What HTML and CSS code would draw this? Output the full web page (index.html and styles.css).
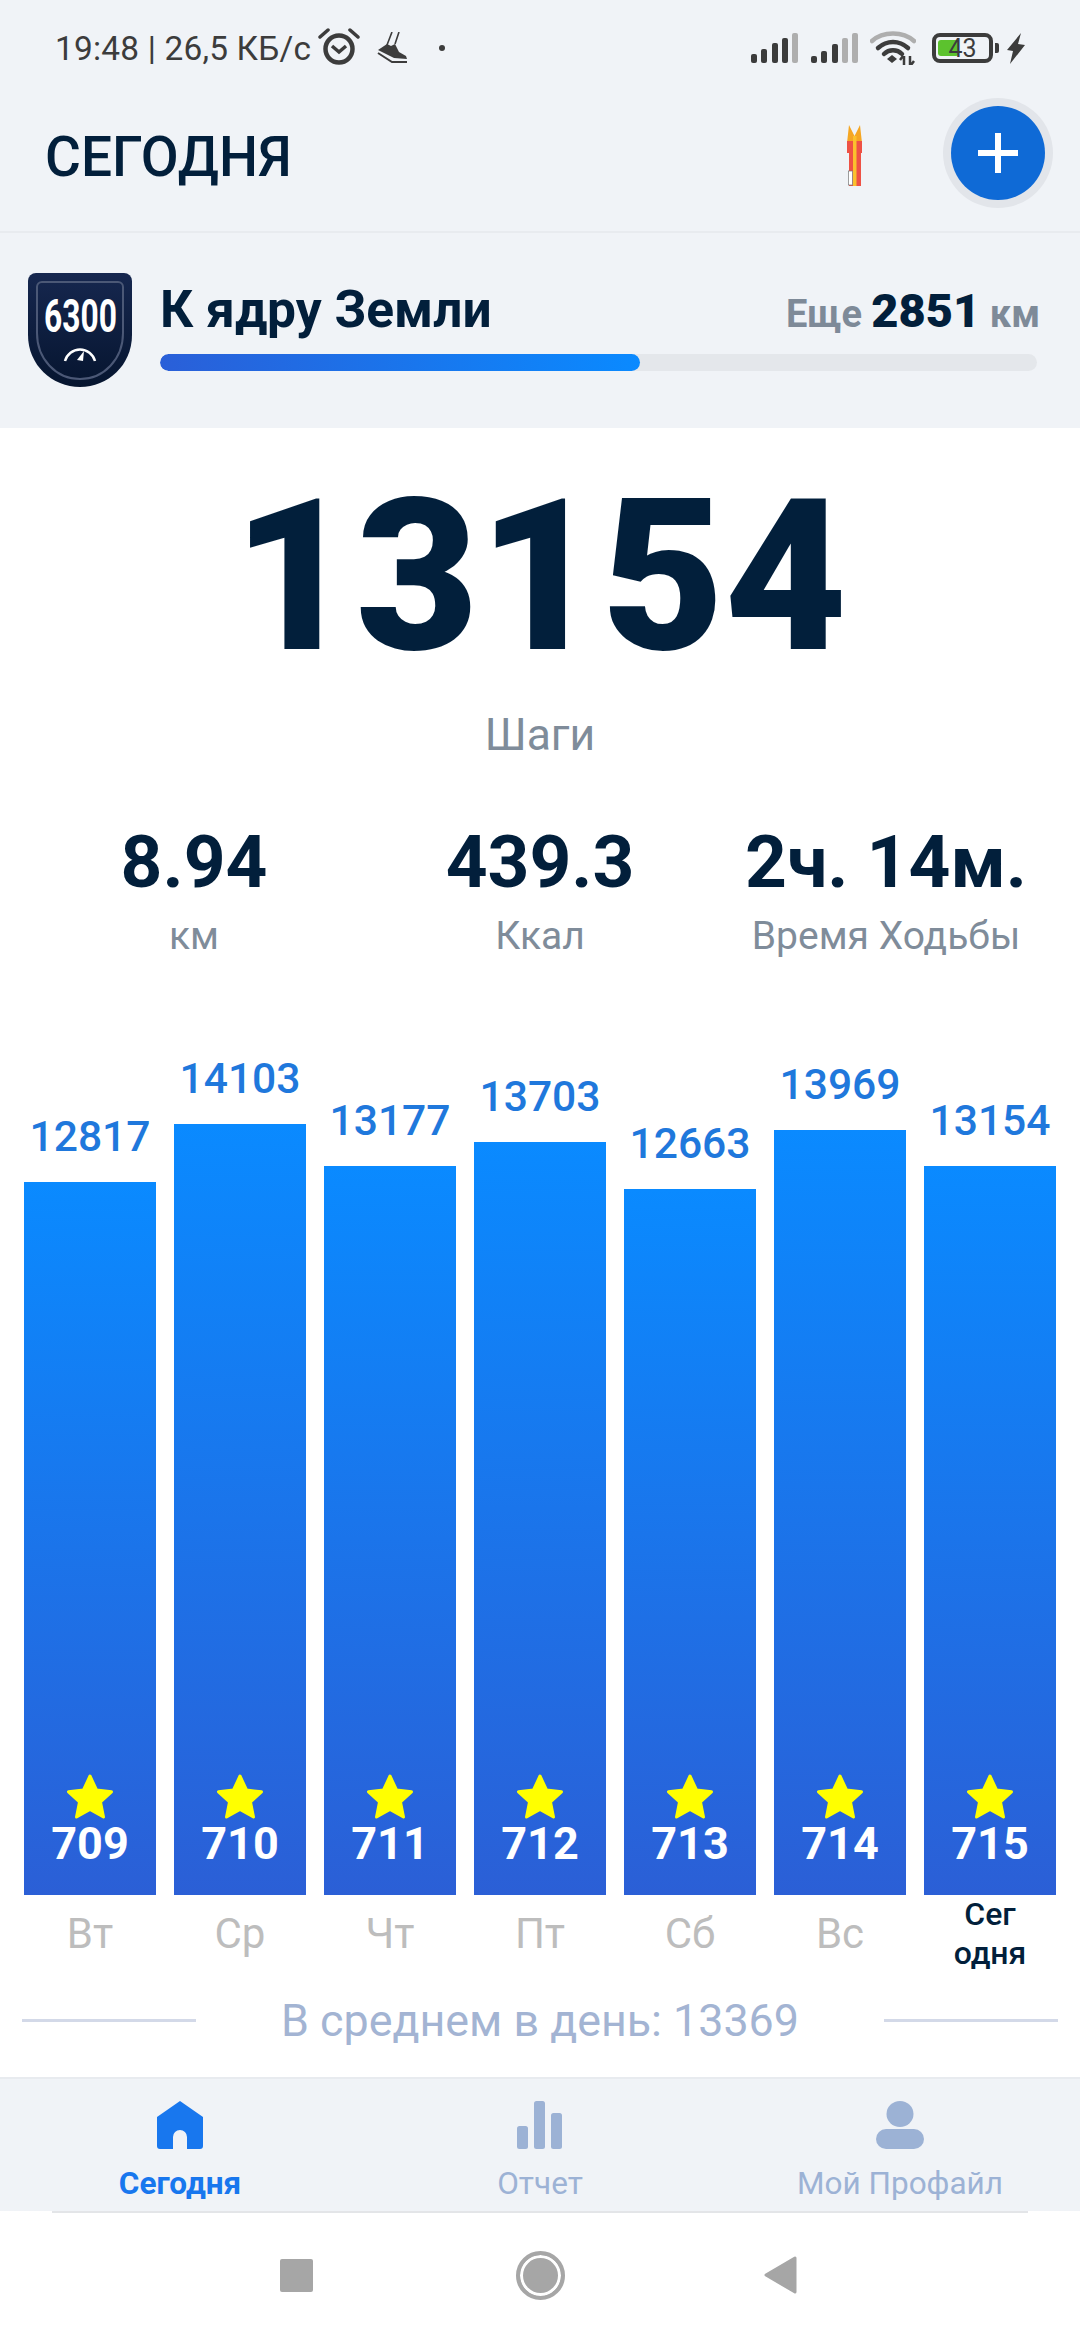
FILE: index.html
```html
<!DOCTYPE html>
<html lang="ru">

<head>
    <meta charset="UTF-8">
    <meta name="viewport" content="width=device-width, initial-scale=1.0">
    <title>Сегодня</title>
    <link rel="stylesheet" href="styles.css">
</head>

<body>
    <section id="top">
        <div class="status">
            <span class="status-text">19:48 | 26,5 КБ/с</span>
            <svg class="alarm" viewBox="0 0 42 38" width="42" height="38">
                <circle cx="21" cy="22" r="13.5" fill="none" stroke="#3c3c3c" stroke-width="4.5" />
                <path d="M14 19l7 6 7-6" fill="none" stroke="#3c3c3c" stroke-width="3.5" />
                <path d="M2 10l8-7M40 10l-8-7" fill="none" stroke="#3c3c3c" stroke-width="3.5" stroke-linecap="round" />
            </svg>
            <svg class="shoe" viewBox="0 0 30 33" width="30" height="33">
                <path d="M15 0L10 13M22 0L18 12" fill="none" stroke="#3c3c3c" stroke-width="1.6" />
                <path d="M1 18L10 12 14 14 18 12 22 20 29 24 30 27 17 26z" fill="#3c3c3c" />
                <path d="M1 21l14 9h15" fill="none" stroke="#3c3c3c" stroke-width="2" />
            </svg>
            <span class="dot"></span>
            <div class="status-right">
                <svg viewBox="0 0 48 30" width="48" height="30">
                    <g fill="#3c3c3c">
                        <rect x="0" y="21" width="6" height="9" rx="2" />
                        <rect x="10" y="16" width="6" height="14" rx="2" />
                        <rect x="21" y="10" width="6" height="20" rx="2" />
                        <rect x="31" y="5" width="6" height="25" rx="2" />
                    </g>
                    <rect x="41" y="0" width="6" height="30" rx="2" fill="#aeaeae" />
                </svg>
                <svg viewBox="0 0 48 30" width="48" height="30">
                    <g fill="#3c3c3c">
                        <rect x="0" y="23" width="6" height="7" rx="2" />
                        <rect x="10" y="18" width="6" height="12" rx="2" />
                        <rect x="21" y="11" width="6" height="19" rx="2" />
                    </g>
                    <g fill="#aeaeae">
                        <rect x="31" y="5" width="6" height="25" rx="2" />
                        <rect x="41" y="0" width="6" height="30" rx="2" />
                    </g>
                </svg>
                <svg class="wifi" viewBox="0 0 46 34" width="46" height="34">
                    <path d="M2 10C13 0 33 0 44 10" fill="none" stroke="#aeaeae" stroke-width="4.5" stroke-linecap="round" />
                    <path d="M8 17C17 9 29 9 38 17" fill="none" stroke="#3c3c3c" stroke-width="4.5" stroke-linecap="round" />
                    <path d="M14 23C19 18 27 18 32 23" fill="none" stroke="#3c3c3c" stroke-width="4.5" stroke-linecap="round" />
                    <path d="M17 28l5-4 5 4-5 4z" fill="#3c3c3c" />
                    <path d="M34 25v9M33 25l-3 4M40 34v-9M41 34l3-4" fill="none" stroke="#3c3c3c" stroke-width="2.500" />
                </svg>
                <div class="battery">
                    <div class="battery-body">
                        <span class="battery-fill"></span>
                        <span class="battery-num">43</span>
                    </div>
                    <span class="battery-nub"></span>
                </div>
                <svg class="bolt" viewBox="0 0 18 31" width="18" height="31">
                    <path d="M14 0L0 17l6 1-3 13 15-19-7-1z" fill="#3c3c3c" />
                </svg>
            </div>
        </div>
        <div class="topbar">
            <h1>СЕГОДНЯ</h1>
            <svg class="rocket" viewBox="0 0 15 61" width="15" height="61">
                <path d="M2 0l5.500 11L13 0l2 18H0z" fill="#f5a623" />
                <rect x="0" y="16" width="15" height="12" fill="#ee5145" />
                <rect x="2" y="28" width="12" height="33" fill="#ee5145" />
                <rect x="6" y="11" width="3.500" height="50" fill="#fbc02d" />
                <rect x="1.500" y="46" width="4" height="14" fill="#fff" stroke="#777" stroke-width="0.700" />
            </svg>
            <div class="add-ring">
                <div class="add-btn">
                    <svg viewBox="0 0 40 40" width="40" height="40">
                        <path d="M20 0v40M0 20h40" stroke="#fff" stroke-width="6" />
                    </svg>
                </div>
            </div>
        </div>
    </section>

    <section id="goal">
        <div class="badge">
            <svg viewBox="0 0 104 114" width="104" height="114">
                <defs>
                    <linearGradient id="badge-bg" x1="0" y1="0" x2="0" y2="1">
                        <stop offset="0" stop-color="#16274f" />
                        <stop offset="1" stop-color="#06152f" />
                    </linearGradient>
                </defs>
                <path d="M8 0H96a8 8 0 0 1 8 8V62C104 92 80 114 52 114S0 92 0 62V8A8 8 0 0 1 8 0z" fill="url(#badge-bg)" />
                <path d="M14 9H90a5 5 0 0 1 5 5V60C95 86 76 106 52 106S9 86 9 60V14A5 5 0 0 1 14 9z" fill="none" stroke="#4b5876" stroke-width="2" />
                <path d="M37 88a15.500 15.500 0 0 1 30 0" fill="none" stroke="#fff" stroke-width="2.500" />
                <path d="M49 87l7-9-1 10z" fill="#fff" />
            </svg>
            <span class="badge-num">6300</span>
        </div>
        <div class="goal-body">
            <div class="goal-head">
                <span class="goal-title">К ядру Земли</span>
                <span class="goal-left">Еще <b>2851</b> км</span>
            </div>
            <div class="goal-track">
                <div class="goal-fill"></div>
            </div>
        </div>
    </section>

    <section id="today">
        <div class="steps">13154</div>
        <div class="steps-label">Шаги</div>
        <div class="stats">
            <div class="stat">
                <div class="stat-num">8.94</div>
                <div class="stat-label">км</div>
            </div>
            <div class="stat">
                <div class="stat-num">439.3</div>
                <div class="stat-label">Ккал</div>
            </div>
            <div class="stat">
                <div class="stat-num">2ч. 14м.</div>
                <div class="stat-label">Время Ходьбы</div>
            </div>
        </div>
    </section>

    <section id="chart">
        <div class="col">
            <div class="col-val">12817</div>
            <div class="bar" style="height: 713px">
                <svg class="star" viewBox="0 0 50 46" width="50" height="46"><path d="M25 3l6.500 14 15 1.800-11 10.200 3 15-13.500-7.500L11.500 44l3-15-11-10.200 15-1.800z" fill="#ffff00" stroke="#ffff00" stroke-width="3" stroke-linejoin="round" /></svg>
                <div class="bar-num">709</div>
            </div>
        </div>
        <div class="col">
            <div class="col-val">14103</div>
            <div class="bar" style="height: 771px">
                <svg class="star" viewBox="0 0 50 46" width="50" height="46"><path d="M25 3l6.500 14 15 1.800-11 10.200 3 15-13.500-7.500L11.500 44l3-15-11-10.200 15-1.800z" fill="#ffff00" stroke="#ffff00" stroke-width="3" stroke-linejoin="round" /></svg>
                <div class="bar-num">710</div>
            </div>
        </div>
        <div class="col">
            <div class="col-val">13177</div>
            <div class="bar" style="height: 729px">
                <svg class="star" viewBox="0 0 50 46" width="50" height="46"><path d="M25 3l6.500 14 15 1.800-11 10.200 3 15-13.500-7.500L11.500 44l3-15-11-10.200 15-1.800z" fill="#ffff00" stroke="#ffff00" stroke-width="3" stroke-linejoin="round" /></svg>
                <div class="bar-num">711</div>
            </div>
        </div>
        <div class="col">
            <div class="col-val">13703</div>
            <div class="bar" style="height: 753px">
                <svg class="star" viewBox="0 0 50 46" width="50" height="46"><path d="M25 3l6.500 14 15 1.800-11 10.200 3 15-13.500-7.500L11.500 44l3-15-11-10.200 15-1.800z" fill="#ffff00" stroke="#ffff00" stroke-width="3" stroke-linejoin="round" /></svg>
                <div class="bar-num">712</div>
            </div>
        </div>
        <div class="col">
            <div class="col-val">12663</div>
            <div class="bar" style="height: 706px">
                <svg class="star" viewBox="0 0 50 46" width="50" height="46"><path d="M25 3l6.500 14 15 1.800-11 10.200 3 15-13.500-7.500L11.500 44l3-15-11-10.200 15-1.800z" fill="#ffff00" stroke="#ffff00" stroke-width="3" stroke-linejoin="round" /></svg>
                <div class="bar-num">713</div>
            </div>
        </div>
        <div class="col">
            <div class="col-val">13969</div>
            <div class="bar" style="height: 765px">
                <svg class="star" viewBox="0 0 50 46" width="50" height="46"><path d="M25 3l6.500 14 15 1.800-11 10.200 3 15-13.500-7.500L11.500 44l3-15-11-10.200 15-1.800z" fill="#ffff00" stroke="#ffff00" stroke-width="3" stroke-linejoin="round" /></svg>
                <div class="bar-num">714</div>
            </div>
        </div>
        <div class="col">
            <div class="col-val">13154</div>
            <div class="bar" style="height: 729px">
                <svg class="star" viewBox="0 0 50 46" width="50" height="46"><path d="M25 3l6.500 14 15 1.800-11 10.200 3 15-13.500-7.500L11.500 44l3-15-11-10.200 15-1.800z" fill="#ffff00" stroke="#ffff00" stroke-width="3" stroke-linejoin="round" /></svg>
                <div class="bar-num">715</div>
            </div>
        </div>
    </section>

    <section id="days">
        <div class="day">Вт</div>
        <div class="day">Ср</div>
        <div class="day">Чт</div>
        <div class="day">Пт</div>
        <div class="day">Сб</div>
        <div class="day">Вс</div>
        <div class="day day-now">Сег<br>одня</div>
    </section>

    <section id="average">
        <span class="avg-line"></span>
        <span class="avg-text">В среднем в день: 13369</span>
        <span class="avg-line"></span>
    </section>

    <ul id="tabs">
        <li class="tab tab-active">
            <svg viewBox="0 0 46 48" width="46" height="48">
                <path d="M23 0L46 16V45a3 3 0 0 1-3 3H30V36a7 7 0 0 0-14 0V48H3a3 3 0 0 1-3-3V16z" fill="#1877ee" />
            </svg>
            <span>Сегодня</span>
        </li>
        <li class="tab">
            <svg viewBox="0 0 46 48" width="46" height="48">
                <g fill="#9cb2d5">
                    <rect x="0" y="25" width="11" height="23" rx="2.500" />
                    <rect x="17" y="0" width="11" height="48" rx="2.500" />
                    <rect x="34" y="12" width="11" height="36" rx="2.500" />
                </g>
            </svg>
            <span>Отчет</span>
        </li>
        <li class="tab">
            <svg viewBox="0 0 48 48" width="48" height="48">
                <g fill="#9cb2d5">
                    <ellipse cx="24" cy="13" rx="13.500" ry="13" />
                    <rect x="0" y="28" width="48" height="20" rx="10" />
                </g>
            </svg>
            <span>Мой Профайл</span>
        </li>
    </ul>

    <section id="sysnav">
        <div class="sys-line"></div>
        <div class="sys-btns">
            <span class="sys-square"></span>
            <span class="sys-circle"></span>
            <svg viewBox="0 0 33 38" width="33" height="38">
                <path d="M31 2v34L2 19z" fill="#a6a6a6" stroke="#a6a6a6" stroke-width="3" stroke-linejoin="round" />
            </svg>
        </div>
    </section>
</body>

</html>
```

FILE: styles.css
```css
* {
    margin: 0;
    padding: 0;
    box-sizing: border-box;
}

html,
body {
    height: 100%;
    overflow: hidden;
}

body {
    background: #fff;
    font-family: Roboto, "Noto Sans", sans-serif;
    color: #021f3b;
}

#top {
    height: 233px;
    background-color: #f0f3f7;
    border-bottom: 2px solid #e8ebef;
}

.status {
    height: 96px;
    display: flex;
    align-items: center;
    padding: 0 55px;
}

.status-text {
    font-size: 33.4px;
    color: #3c3c3c;
    letter-spacing: 0.2px;
}

.alarm {
    margin-left: 7px;
    margin-top: -4px;
}

.shoe {
    margin-left: 17px;
}

.dot {
    width: 6px;
    height: 6px;
    margin-left: 32px;
    border-radius: 50%;
    background: #3c3c3c;
}

.status-right {
    margin-left: auto;
    display: flex;
    align-items: center;
    gap: 12px;
}

.status-right .wifi {
    margin-left: -1px;
}

.battery {
    display: flex;
    align-items: center;
    margin-left: 4px;
    gap: 2px;
}

.battery-body {
    position: relative;
    width: 61px;
    height: 30px;
    border: 4px solid #3c3c3c;
    border-radius: 8px;
    display: flex;
    align-items: center;
    justify-content: center;
}

.battery-fill {
    position: absolute;
    left: 2px;
    top: 3px;
    bottom: 3px;
    width: 21px;
    border-radius: 3px;
    background: #5cc22e;
}

.battery-num {
    position: relative;
    font-size: 25px;
    color: #3c3c3c;
}

.battery-nub {
    width: 4px;
    height: 10px;
    border-radius: 0 2px 2px 0;
    background: #3c3c3c;
}

.bolt {
    margin-left: -4px;
}

.topbar {
    height: 135px;
    display: flex;
    align-items: center;
    padding: 0 28px 0 45px;
}

.topbar h1 {
    margin-top: -14px;
    font-size: 55px;
    font-weight: 500;
    color: #021f3b;
}

.rocket {
    margin-left: auto;
    margin-top: -16px;
}

.add-ring {
    width: 110px;
    height: 110px;
    margin-left: 81px;
    margin-right: -1px;
    margin-top: -22px;
    border-radius: 50%;
    background: #e2e5ea;
    display: flex;
    align-items: center;
    justify-content: center;
}

.add-btn {
    width: 94px;
    height: 94px;
    border-radius: 50%;
    background: #0f6ad6;
    display: flex;
    align-items: center;
    justify-content: center;
}

#goal {
    height: 195px;
    background-color: #f0f3f7;
    display: flex;
    padding: 40px 43px 0 28px;
}

.badge {
    flex: none;
    position: relative;
    width: 104px;
    height: 114px;
}

.badge-num {
    position: absolute;
    left: 0;
    right: 0;
    top: 16px;
    font-size: 46px;
    line-height: 54px;
    font-weight: 700;
    text-align: center;
    color: #fff;
    transform: scaleX(0.69);
}

.goal-body {
    flex: 1;
    margin-left: 28px;
    padding-top: 8px;
}

.goal-head {
    display: flex;
    align-items: baseline;
    justify-content: space-between;
    height: 58px;
    line-height: 58px;
}

.goal-title {
    font-size: 51.5px;
    font-weight: 700;
}

.goal-left {
    margin-right: -3px;
    font-size: 38px;
    font-weight: 700;
    color: #7e8a98;
}

.goal-left b {
    font-size: 47px;
    color: #021f3b;
}

.goal-track {
    height: 17px;
    margin-top: 15px;
    border-radius: 9px;
    background: #e4e7eb;
    overflow: hidden;
}

.goal-fill {
    width: 480px;
    height: 100%;
    border-radius: 9px;
    background: linear-gradient(to right, #2a5fd8, #0a8aff);
}

#today {
    text-align: center;
}

.steps {
    margin-top: 44px;
    font-size: 212px;
    line-height: 210px;
    font-weight: 900;
}

.steps-label {
    margin-top: 28px;
    font-size: 44.5px;
    line-height: 50px;
    color: #7f8c9a;
}

.stats {
    display: flex;
    margin-top: 62px;
    padding: 0 21px;
}

.stat {
    flex: 1;
}

.stat-num {
    font-size: 73px;
    line-height: 80px;
    font-weight: 700;
}

.stat-label {
    margin-top: 11px;
    font-size: 39px;
    line-height: 46px;
    color: #7f8c9a;
}

#chart {
    height: 936px;
    display: flex;
    align-items: flex-end;
    gap: 18px;
    padding: 0 24px;
}

.col {
    flex: 1;
}

.col-val {
    margin-bottom: 22px;
    font-size: 42.6px;
    line-height: 48px;
    font-weight: 500;
    text-align: center;
    color: #1f78dc;
}

.bar {
    display: flex;
    flex-direction: column;
    align-items: center;
    justify-content: flex-end;
    padding-bottom: 25px;
    background: linear-gradient(to bottom, #0a8aff, #2b5fd6);
}

.bar-num {
    margin-top: -2px;
    font-size: 45px;
    line-height: 53px;
    font-weight: 700;
    color: #fff;
}

#days {
    height: 78px;
    display: flex;
    gap: 18px;
    padding: 0 24px;
}

.day {
    flex: 1;
    padding-top: 15px;
    font-size: 42px;
    line-height: 48px;
    text-align: center;
    color: #bdbdbd;
}

.day-now {
    padding-top: 0;
    font-size: 32px;
    line-height: 39px;
    font-weight: 500;
    color: #021f3b;
}

#average {
    height: 104px;
    padding: 0 22px 10px;
    display: flex;
    align-items: center;
    justify-content: space-between;
}

.avg-line {
    width: 174px;
    height: 3px;
    background: #d3d9e8;
}

.avg-text {
    font-size: 44.8px;
    color: #a3b4d3;
}

#tabs {
    height: 134px;
    display: flex;
    list-style: none;
    padding-top: 22px;
    background-color: #f0f3f7;
    border-top: 2px solid #e8ebef;
}

.tab {
    flex: 1;
    display: flex;
    flex-direction: column;
    align-items: center;
    color: #9cb2d5;
    font-size: 31.5px;
}

.tab span {
    margin-top: 17px;
    line-height: 36px;
}

.tab-active {
    color: #1877ee;
    font-weight: 700;
}

#sysnav {
    height: 130px;
}

.sys-line {
    height: 2px;
    margin: 0 52px;
    background: #e3e5e8;
}

.sys-btns {
    height: 128px;
    padding-bottom: 4px;
    display: flex;
    align-items: center;
    padding-left: 280px;
}

.sys-square {
    width: 33px;
    height: 33px;
    border-radius: 2px;
    background: #a6a6a6;
}

.sys-circle {
    width: 49px;
    height: 49px;
    margin-left: 203px;
    margin-right: 199px;
    border: 4px solid #a6a6a6;
    border-radius: 50%;
    background: #a6a6a6;
    box-shadow: inset 0 0 0 3px #fff;
}
```
